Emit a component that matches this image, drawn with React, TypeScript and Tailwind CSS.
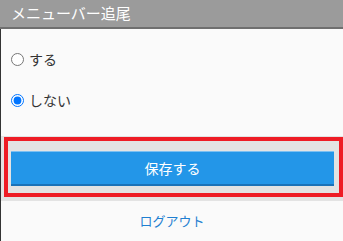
export default function App() {
  return (
    <div
      className="w-[343px] h-[241px] overflow-hidden bg-[#fafafa]"
      style={{ fontFamily: '"Noto Sans CJK JP", "Noto Sans", sans-serif' }}
    >
      <div className="h-[29px] bg-[#9b9b9b] border-b-2 border-[#6f6f6f] pl-[11px] flex items-center text-[15px] text-white">
        メニューバー追尾
      </div>

      <div className="h-[212px] border-l border-[#333333] bg-[#fafafa]">
        <div className="pt-[10px] pb-[15px]">
          <label className="h-[41px] flex items-center gap-[5px] text-[14px] text-[#333333]">
            <input type="radio" name="follow" className="ml-[10px] size-[13px] m-0" />
            する
          </label>
          <label className="h-[41px] flex items-center gap-[5px] text-[14px] text-[#333333]">
            <input type="radio" name="follow" defaultChecked className="ml-[10px] size-[13px] m-0" />
            しない
          </label>
        </div>

        <div className="h-[65px] bg-[#e3e3e3] pt-px pl-[3px]">
          <div className="h-[60px] border-4 border-[#ee1c25] pt-[10px] pl-[3px] pr-[5px]">
            <button className="w-full h-[35px] bg-[#2396e8] border-t border-[#7cc0f2] border-b-2 border-b-[#1a72b8] text-white text-[14px] flex items-center justify-center">
              保存する
            </button>
          </div>
        </div>

        <div className="h-[40px] flex items-center justify-center text-[13px] text-[#1f7fd1]">
          ログアウト
        </div>
      </div>
    </div>
  )
}
